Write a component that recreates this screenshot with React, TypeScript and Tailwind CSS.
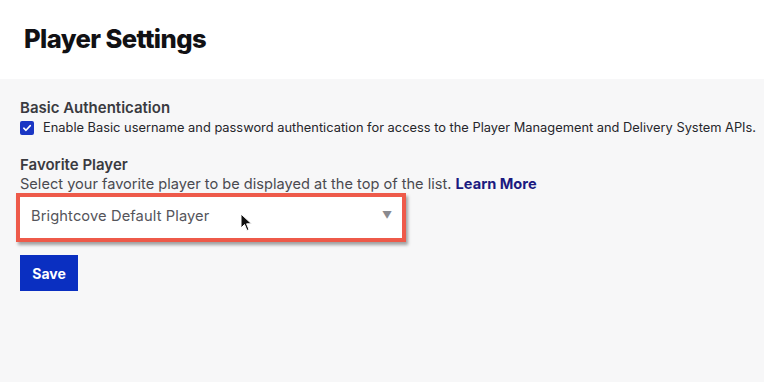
import React from "react";

function Cursor() {
  return (
    <svg
      className="absolute left-[240px] top-[213px] pointer-events-none"
      width="13"
      height="19"
      viewBox="0 0 13 19"
    >
      <path
        d="M1 1 L1 15 L4.5 11.5 L7 17.5 L9 16.6 L6.6 10.8 L11.5 10.8 Z"
        fill="#111"
        stroke="#fff"
        strokeWidth="1"
        strokeLinejoin="round"
      />
    </svg>
  );
}

export default function App() {
  return (
    <div className="relative w-[764px] h-[382px] overflow-hidden bg-[#f7f7f8] font-['Inter',sans-serif] text-[#2e2e33]">
      {/* header */}
      <div className="h-[79px] bg-white flex items-center px-6">
        <h1 className="text-[25.6px] font-extrabold tracking-[-0.6px] text-[#111114]">
          Player Settings
        </h1>
      </div>

      <div className="flex flex-col px-5 pt-[19px]">
        <div className="text-[15px] font-semibold leading-5 text-[#3a3a40]">Basic Authentication</div>
        <label className="flex items-center gap-[9px] h-5">
          <span className="w-[14px] h-[14px] shrink-0 rounded-[2px] bg-[#1a36c4] flex items-center justify-center">
            <svg width="10" height="10" viewBox="0 0 10 10">
              <path d="M1.8 5.2 L4 7.3 L8.3 2.6" fill="none" stroke="#fff" strokeWidth="1.6" strokeLinecap="round" strokeLinejoin="round" />
            </svg>
          </span>
          <span className="text-[12.85px] leading-5 whitespace-nowrap text-[#26262b]">
            Enable Basic username and password authentication for access to the Player Management and Delivery System APIs.
          </span>
        </label>

        <div className="mt-[17px] text-[15px] font-semibold leading-5 text-[#3a3a40]">Favorite Player</div>
        <div className="text-[14.6px] leading-[18px] text-[#4a4a50]">
          Select your favorite player to be displayed at the top of the list.{" "}
          <a className="font-bold text-[#1b1a80]">Learn More</a>
        </div>

        <div className="mt-0 -ml-1 w-[390px] border-[4px] border-[#ee5a4a] shadow-[2px_3px_3px_rgba(0,0,0,0.35)]">
          <div className="h-[41px] bg-white flex items-center justify-between pl-[11px] pr-[10px] pb-[3px]">
            <span className="text-[14.7px] text-[#55555b] tracking-[0.1px]">Brightcove Default Player</span>
            <span className="text-[10px] text-[#8a8a8f] -mt-[2px]">▼</span>
          </div>
        </div>

        <button className="mt-[13px] w-[58px] h-[36px] bg-[#0a2fc1] text-white text-[14px] font-bold">
          Save
        </button>
      </div>

      <Cursor />
    </div>
  );
}
